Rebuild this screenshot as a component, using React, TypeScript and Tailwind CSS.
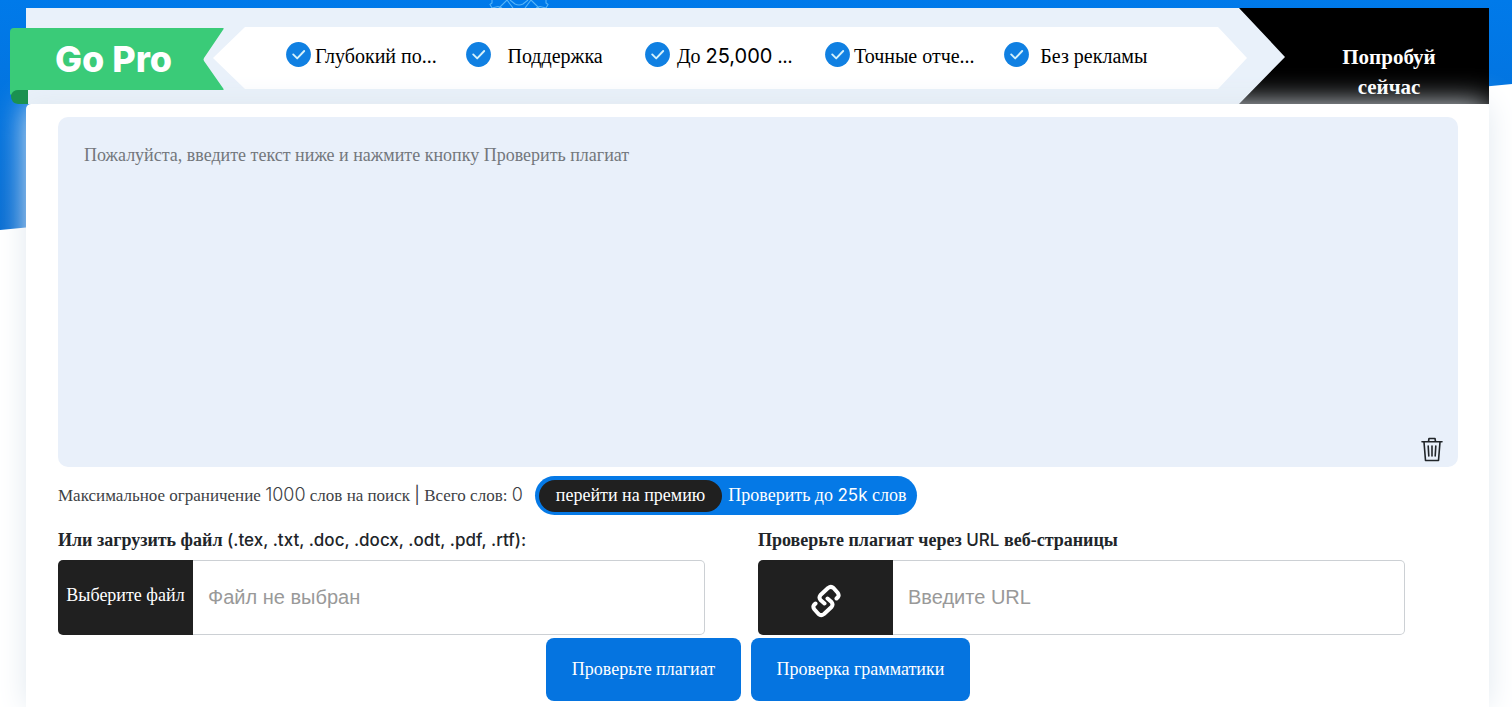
import React from "react";

const SERIF = "font-['Liberation_Serif',serif]";

function Latin({ children }: { children: React.ReactNode }) {
  return <span className="font-['Inter',sans-serif]">{children}</span>;
}

function CheckBadge() {
  return (
    <svg viewBox="0 0 25 25" className="size-[25px] shrink-0" aria-hidden="true">
      <circle cx="12.5" cy="12.5" r="12.4" fill="#1080e2" />
      <path d="M7.2 12.4l4 4 7-7.4" fill="none" stroke="#d4f1fb" strokeWidth="1.9" strokeLinecap="round" strokeLinejoin="round" />
    </svg>
  );
}

function GearOutline() {
  return (
    <svg viewBox="0 0 60 8" className="absolute top-0 left-[489px] h-2 w-[60px]" fill="none" stroke="#56b4f7" strokeWidth="1.1" aria-hidden="true">
      <path d="M3 0v3l-2 1.500L3 8l6-1.500L13 8M57 0v3l2 1.500L57 8l-6-1.500L47 8" />
      <path d="M10 8l8-8 6 8M50 8l-8-8-6 8M21 0l5 4q4 2 8 0l5-4" />
    </svg>
  );
}

function TrashIcon() {
  return (
    <svg viewBox="0 0 22 25" className="h-[25px] w-[22px]" fill="none" stroke="#212529" strokeWidth="1.6" strokeLinejoin="round" strokeLinecap="round" aria-hidden="true">
      <path d="M1 4.700h20M7.500 4.500L8 1.500h6l.5 3M3 5l1.500 18.500h13L19 5" />
      <path d="M7.200 9l.6 10M11 9v10M14.800 9l-.6 10" />
    </svg>
  );
}

function LinkIcon() {
  return (
    <svg viewBox="0 0 30 34" className="h-[34px] w-[30px]" fill="none" stroke="#fff" strokeWidth="4" strokeLinecap="round" strokeLinejoin="round" aria-hidden="true">
      <path d="M25.500 14.500L27 13Q28.500 11 26.500 8.500L22.500 4Q20 1.800 17 4L9.500 11Q7.500 13.500 9.500 16L13.500 19.500" />
      <path d="M4.500 19.500L3 21Q1.500 23 3.500 25.500L7.500 30Q10 32.200 13 30L20.500 23Q22.500 20.500 20.500 18L16.500 14.500" />
    </svg>
  );
}

const features: { key: string; label: React.ReactNode }[] = [
  { key: "deep", label: "Глубокий по..." },
  { key: "support", label: "Поддержка" },
  { key: "limit", label: <>До <Latin>25,000</Latin> ...</> },
  { key: "reports", label: "Точные отче..." },
  { key: "ads", label: "Без рекламы" },
];

function PremiumBanner() {
  return (
    <div className="flex h-24 bg-[#e9f1fa]">
      <div className="relative z-10 -ml-4 mt-5 h-[76px] w-[214px] shrink-0">
        <svg viewBox="0 0 214 76" className="absolute inset-0 size-full" aria-hidden="true">
          <path d="M1 60h17v16H8q-7-1-7-8z" fill="#1b9150" />
          <path d="M4 0h209q1 0 .6 1L194 30q-1 1.500 0 3l19.600 28q.4 1-.6 1H8q-5 0-7 5L0 66V4q0-4 4-4z" fill="#3acb78" />
        </svg>
        <span className="relative flex h-[62px] items-center pl-[45px] font-['Inter',sans-serif] text-4xl font-extrabold text-white">Go Pro</span>
      </div>
      <ul className="-ml-[11px] mt-[19px] flex h-[62px] min-w-0 grow bg-white pr-[63px] pl-[73px] [clip-path:polygon(0_50%,32px_0,calc(100%-29px)_0,100%_50%,calc(100%-29px)_100%,32px_100%)]">
        {features.map((f) => (
          <li key={f.key} className="flex min-w-0 flex-1 items-start gap-1 pt-[15px] text-xl text-black">
            <CheckBadge />
            <span className="w-[121px] text-center whitespace-nowrap">{f.label}</span>
          </li>
        ))}
      </ul>
      <a
        href="#premium"
        className="-ml-2 flex w-[250px] shrink-0 justify-center bg-black pt-[34px] pl-[50px] text-center text-[21px] leading-[30px] font-bold text-white [clip-path:polygon(0_0,100%_0,100%_100%,0_100%,46px_51%)]"
      >
        <span className="w-[120px]">Попробуй сейчас</span>
      </a>
    </div>
  );
}

export default function App() {
  return (
    <div className={`relative flex min-h-screen flex-col overflow-hidden bg-white pt-2 pr-[23px] pl-[26px] text-[#212529] ${SERIF}`}>
      <div className="absolute inset-x-0 top-0 h-[230px] bg-linear-to-b from-[#007aea] to-[#066cd2] [clip-path:polygon(0_0,100%_0,100%_84px,0_230px)]" />
      <GearOutline />
      <div className="relative flex grow flex-col">
        <PremiumBanner />
        <main className="relative grow rounded-t-[5px] bg-white pt-[13px] pr-[31px] pl-8 shadow-[0_0_30px_#e0e8ef]">
          <div className="relative">
            <textarea
              aria-label="Текст для проверки"
              placeholder="Пожалуйста, введите текст ниже и нажмите кнопку Проверить плагиат"
              className="block h-[350px] w-full resize-none rounded-[10px] bg-[#e9f0fa] px-[26px] py-6 text-lg leading-7 outline-none placeholder:text-[#73777c]"
            />
            <button type="button" aria-label="Очистить" className="absolute right-[15px] bottom-[5px]">
              <TrashIcon />
            </button>
          </div>

          <div className="mt-[9px] flex items-center gap-3 text-[#3d4145]">
            <p className="text-[17px] leading-7 whitespace-nowrap">
              Максимальное ограничение <span className="font-['Inter',sans-serif] text-lg font-light">1000</span> слов на поиск <Latin>|</Latin> Всего слов:{" "}
              <span className="font-['Inter',sans-serif] text-lg font-light">0</span>
            </p>
            <a href="#premium" className="flex h-[39px] items-center rounded-full bg-[#0579e6] pr-[10px] pl-1 text-lg whitespace-nowrap text-white">
              <span className="mr-[6px] flex h-8 items-center rounded-full bg-[#202020] px-[17px] pb-[2px]">перейти на премию</span>
              <span className="pb-[2px]">
                Проверить до <span className="font-['Inter',sans-serif] text-[17px]">25k</span> слов
              </span>
            </a>
          </div>

          <div className="mt-[5px] grid grid-cols-2">
            <div className="pr-[53px]">
              <label htmlFor="file-name" className="flex h-10 items-center text-lg leading-[38px] font-bold whitespace-nowrap">
                <span>
                  Или загрузить файл <span className="font-['Inter',sans-serif] text-[17px] font-medium">(.tex, .txt, .doc, .docx, .odt, .pdf, .rtf):</span>
                </span>
              </label>
              <div className="flex h-[75px]">
                <button type="button" className="w-[135px] shrink-0 rounded-l-[5px] bg-[#202020] pb-[6px] text-lg whitespace-nowrap text-white">Выберите файл</button>
                <input id="file-name" readOnly placeholder="Файл не выбран" className="min-w-0 grow rounded-r-[5px] border border-l-0 border-[#ccd0d4] px-[15px] pb-[2px] font-['Liberation_Sans',sans-serif] text-xl outline-none placeholder:text-[#999]" />
              </div>
            </div>
            <div className="pr-[53px]">
              <label htmlFor="page-url" className="flex h-10 items-center text-lg leading-[38px] font-bold whitespace-nowrap">
                <span>
                  Проверьте плагиат через <span className="font-['Inter',sans-serif] text-[17px] font-medium">URL</span> веб-страницы
                </span>
              </label>
              <div className="flex h-[75px]">
                <button type="button" aria-label="Проверить ссылку" className="flex w-[135px] shrink-0 items-center justify-center rounded-l-[5px] bg-[#202020] pt-[6px] text-white">
                  <LinkIcon />
                </button>
                <input id="page-url" type="url" placeholder="Введите URL" className="min-w-0 grow rounded-r-[5px] border border-l-0 border-[#ccd0d4] px-[15px] pb-[2px] font-['Liberation_Sans',sans-serif] text-xl outline-none placeholder:text-[#999]" />
              </div>
            </div>
          </div>

          <div className="mt-[3px] flex justify-center gap-[10px] text-lg text-white">
            <button type="button" className="h-[63px] w-[195px] rounded-lg bg-[#0574e0] pb-[2px] whitespace-nowrap">Проверьте плагиат</button>
            <button type="button" className="h-[63px] w-[219px] rounded-lg bg-[#0574e0] pb-[2px] whitespace-nowrap">Проверка грамматики</button>
          </div>
        </main>
      </div>
    </div>
  );
}
